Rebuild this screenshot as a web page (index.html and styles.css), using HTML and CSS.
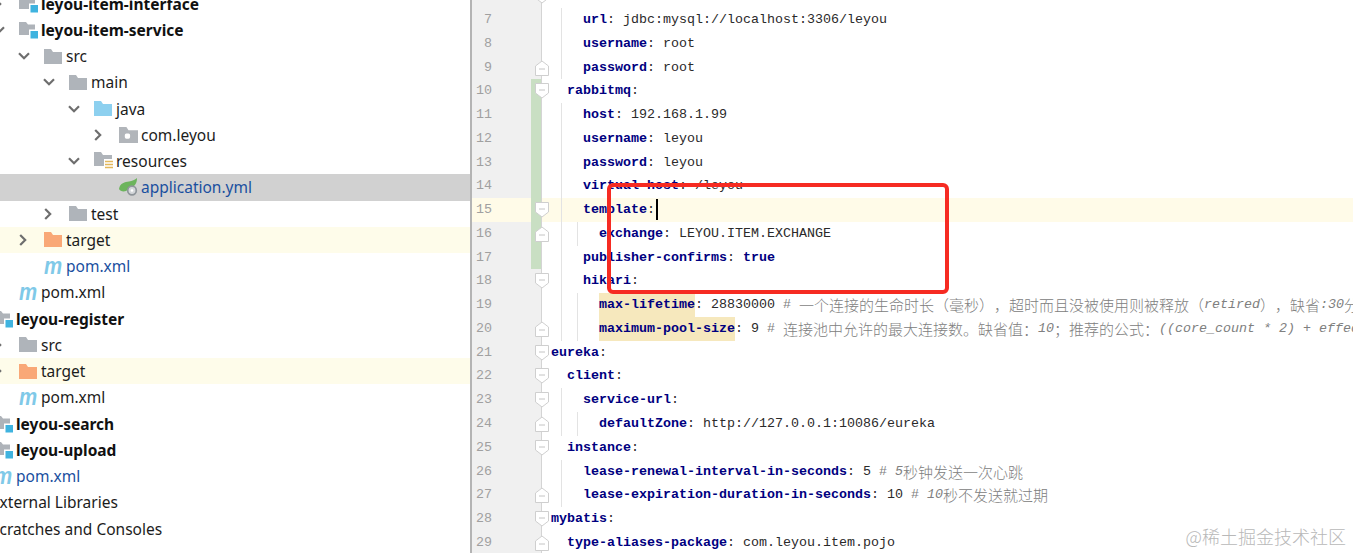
FILE: index.html
```html
<!DOCTYPE html>
<html lang="zh">
<head>
<meta charset="utf-8">
<title>application.yml</title>
<link rel="stylesheet" href="styles.css">
</head>
<body>
<svg class="defs" width="0" height="0">
  <symbol id="chev-d" viewBox="0 0 12 8"><path d="M1 1.2 6 6.2 11 1.2" fill="none" stroke="#6e6e6e" stroke-width="2.2"/></symbol>
  <symbol id="chev-r" viewBox="0 0 8 12"><path d="M1.2 1 6.2 6 1.2 11" fill="none" stroke="#6e6e6e" stroke-width="2.2"/></symbol>
  <symbol id="folder" viewBox="0 0 18 15"><path d="M0 0H7L9 3H18V15H0Z"/></symbol>
  <symbol id="module" viewBox="0 0 19 18"><path d="M0 1H7L9 3.500H16V14H0Z" fill="#aeb3b9"/><rect x="10" y="8.500" width="9" height="9" fill="#fff"/><rect x="11.500" y="10" width="7.500" height="7.500" fill="#3fb3df"/></symbol>
  <symbol id="package" viewBox="0 0 18 15"><path d="M0 0H7L9 3H18V15H0Z" fill="#b1b5ba"/><rect x="5.500" y="6" width="5" height="5" rx="1.500" fill="#fff"/></symbol>
  <symbol id="resources" viewBox="0 0 19 18"><path d="M0 0H7L9 3H18V14H0Z" fill="#afb4ba"/><rect x="10" y="7" width="9" height="11" fill="#fff"/><path d="M11 9.500H19M11 12.500H19M11 15.500H19" stroke="#e3b95c" stroke-width="1.600"/></symbol>
  <symbol id="spring" viewBox="0 0 19 18"><path d="M0 11C1 5 6 4 10 3.500 13 3 16 2 18 0 18 5 16 8 13 9L7 13C4 14 1 13 0 11Z" fill="#6cb45c"/><circle cx="13" cy="12.500" r="4.300" fill="#d4d7da" stroke="#8f959a" stroke-width="1.700"/><circle cx="13" cy="12.500" r="1.300" fill="#fff"/></symbol>
  <symbol id="fold-d" viewBox="0 0 14 16"><path d="M.5.500H13.500V10L7 15 .5 10Z" fill="#fff" stroke="#cfcfcf"/><path d="M4 7H10" stroke="#c4c4c4"/></symbol>
  <symbol id="fold-u" viewBox="0 0 14 16"><path d="M.5 15.500H13.500V6L7 1 .5 6Z" fill="#fff" stroke="#cfcfcf"/><path d="M4 9H10" stroke="#c4c4c4"/></symbol>
</svg>

<div class="page">
  <nav class="tree">
    <div class="row l1 bold"><span class="chev"><svg class="cr"><use href="#chev-r"/></svg></span><svg class="ico"><use href="#module"/></svg><span>leyou-item-interface</span></div>
    <div class="row l1 bold"><span class="chev"><svg class="cd"><use href="#chev-d"/></svg></span><svg class="ico"><use href="#module"/></svg><span>leyou-item-service</span></div>
    <div class="row l2"><span class="chev"><svg class="cd"><use href="#chev-d"/></svg></span><svg class="ico gray"><use href="#folder"/></svg><span>src</span></div>
    <div class="row l3"><span class="chev"><svg class="cd"><use href="#chev-d"/></svg></span><svg class="ico gray"><use href="#folder"/></svg><span>main</span></div>
    <div class="row l4"><span class="chev"><svg class="cd"><use href="#chev-d"/></svg></span><svg class="ico sky"><use href="#folder"/></svg><span>java</span></div>
    <div class="row l5"><span class="chev"><svg class="cr"><use href="#chev-r"/></svg></span><svg class="ico"><use href="#package"/></svg><span>com.leyou</span></div>
    <div class="row l4"><span class="chev"><svg class="cd"><use href="#chev-d"/></svg></span><svg class="ico"><use href="#resources"/></svg><span>resources</span></div>
    <div class="row l5 sel blue"><span class="chev"></span><svg class="ico"><use href="#spring"/></svg><span>application.yml</span></div>
    <div class="row l3"><span class="chev"><svg class="cr"><use href="#chev-r"/></svg></span><svg class="ico gray"><use href="#folder"/></svg><span>test</span></div>
    <div class="row l2 ignored"><span class="chev"><svg class="cr"><use href="#chev-r"/></svg></span><svg class="ico orange"><use href="#folder"/></svg><span>target</span></div>
    <div class="row l2 blue"><span class="chev"></span><span class="mvn">m</span><span>pom.xml</span></div>
    <div class="row l1"><span class="chev"></span><span class="mvn">m</span><span>pom.xml</span></div>
    <div class="row l0 bold"><span class="chev"></span><svg class="ico"><use href="#module"/></svg><span>leyou-register</span></div>
    <div class="row l1"><span class="chev"><svg class="cr"><use href="#chev-r"/></svg></span><svg class="ico gray"><use href="#folder"/></svg><span>src</span></div>
    <div class="row l1 ignored"><span class="chev"><svg class="cr"><use href="#chev-r"/></svg></span><svg class="ico orange"><use href="#folder"/></svg><span>target</span></div>
    <div class="row l1"><span class="chev"></span><span class="mvn">m</span><span>pom.xml</span></div>
    <div class="row l0 bold"><span class="chev"></span><svg class="ico"><use href="#module"/></svg><span>leyou-search</span></div>
    <div class="row l0 bold"><span class="chev"></span><svg class="ico"><use href="#module"/></svg><span>leyou-upload</span></div>
    <div class="row l0 blue"><span class="chev"></span><span class="mvn">m</span><span>pom.xml</span></div>
    <div class="row lx"><span class="chev"></span><span class="blank"></span><span>External Libraries</span></div>
    <div class="row lx"><span class="chev"></span><span class="blank"></span><span>Scratches and Consoles</span></div>
  </nav>

  <main class="editor">
    <div class="line"><span class="num"></span><span class="chg"></span><svg class="fold"><use href="#fold-d"/></svg><span class="code"></span></div>
    <div class="line"><span class="num">7</span><span class="chg"></span><span class="code g1">    <b>url</b>: jdbc:mysql://localhost:3306/leyou</span></div>
    <div class="line"><span class="num">8</span><span class="chg"></span><span class="code g1">    <b>username</b>: root</span></div>
    <div class="line"><span class="num">9</span><span class="chg"></span><svg class="fold"><use href="#fold-u"/></svg><span class="code g1">    <b>password</b>: root</span></div>
    <div class="line"><span class="num">10</span><span class="chg on"></span><svg class="fold"><use href="#fold-d"/></svg><span class="code">  <b>rabbitmq</b>:</span></div>
    <div class="line"><span class="num">11</span><span class="chg on"></span><span class="code g1">    <b>host</b>: 192.168.1.99</span></div>
    <div class="line"><span class="num">12</span><span class="chg on"></span><span class="code g1">    <b>username</b>: leyou</span></div>
    <div class="line"><span class="num">13</span><span class="chg on"></span><span class="code g1">    <b>password</b>: leyou</span></div>
    <div class="line"><span class="num">14</span><span class="chg on"></span><span class="code g1">    <b>virtual-host</b>: /leyou</span></div>
    <div class="line cur"><span class="num">15</span><span class="chg on"></span><svg class="fold"><use href="#fold-d"/></svg><span class="code g1">    <b>template</b>:<i class="caret"></i></span></div>
    <div class="line"><span class="num">16</span><span class="chg on"></span><svg class="fold"><use href="#fold-u"/></svg><span class="code g2">      <b>exchange</b>: LEYOU.ITEM.EXCHANGE</span></div>
    <div class="line"><span class="num">17</span><span class="chg on"></span><span class="code g1">    <b>publisher-confirms</b>: <b>true</b></span></div>
    <div class="line"><span class="num">18</span><span class="chg"></span><svg class="fold"><use href="#fold-d"/></svg><span class="code g1">    <b>hikari</b>:</span></div>
    <div class="line"><span class="num">19</span><span class="chg"></span><span class="code g2">      <b class="hl">max-lifetime</b>: 28830000 <span class="cm"># <span class="c">一个连接的生命时长（毫秒），超时而且没被使用则被释放（</span><em>retired</em><span class="c">），缺省</span><em>:30</em><span class="c">分钟</span></span></span></div>
    <div class="line"><span class="num">20</span><span class="chg"></span><svg class="fold"><use href="#fold-u"/></svg><span class="code g2">      <b class="hl">maximum-pool-size</b>: 9 <span class="cm"># <span class="c">连接池中允许的最大连接数。缺省值：</span><em>10</em><span class="c">；推荐的公式：</span><em>((core_count * 2) + effective_spindle_count)</em></span></span></div>
    <div class="line"><span class="num">21</span><span class="chg"></span><svg class="fold"><use href="#fold-d"/></svg><span class="code"><b>eureka</b>:</span></div>
    <div class="line"><span class="num">22</span><span class="chg"></span><svg class="fold"><use href="#fold-d"/></svg><span class="code">  <b>client</b>:</span></div>
    <div class="line"><span class="num">23</span><span class="chg"></span><svg class="fold"><use href="#fold-d"/></svg><span class="code g1">    <b>service-url</b>:</span></div>
    <div class="line"><span class="num">24</span><span class="chg"></span><svg class="fold"><use href="#fold-u"/></svg><span class="code g2">      <b>defaultZone</b>: http://127.0.0.1:10086/eureka</span></div>
    <div class="line"><span class="num">25</span><span class="chg"></span><svg class="fold"><use href="#fold-d"/></svg><span class="code">  <b>instance</b>:</span></div>
    <div class="line"><span class="num">26</span><span class="chg"></span><span class="code g1">    <b>lease-renewal-interval-in-seconds</b>: 5 <span class="cm"># <em>5</em><span class="c">秒钟发送一次心跳</span></span></span></div>
    <div class="line"><span class="num">27</span><span class="chg"></span><svg class="fold"><use href="#fold-u"/></svg><span class="code g1">    <b>lease-expiration-duration-in-seconds</b>: 10 <span class="cm"># <em>10</em><span class="c">秒不发送就过期</span></span></span></div>
    <div class="line"><span class="num">28</span><span class="chg"></span><svg class="fold"><use href="#fold-d"/></svg><span class="code"><b>mybatis</b>:</span></div>
    <div class="line"><span class="num">29</span><span class="chg"></span><svg class="fold"><use href="#fold-u"/></svg><span class="code">  <b>type-aliases-package</b>: com.leyou.item.pojo</span></div>
  </main>
</div>

<div class="callout"></div>
<div class="watermark">@稀土掘金技术社区</div>
</body>
</html>
```
FILE: styles.css
```css
html, body {
  margin: 0;
  height: 553px;
  overflow: hidden;
  background: #fff;
}

.defs {
  position: absolute;
}

.page {
  display: flex;
  height: 553px;
  overflow: hidden;
}

/* project tree */
.tree {
  flex: 0 0 470px;
  box-sizing: border-box;
  height: 553px;
  overflow: hidden;
  font: 15.5px/26.26px "Noto Sans", sans-serif;
  color: #1c1c1c;
}

.row {
  display: flex;
  align-items: center;
  height: 26.26px;
  white-space: nowrap;
  margin-left: -57px;
}

.row:first-child {
  margin-top: -9.5px;
}

.lx { padding-left: 0; }
.l0 { padding-left: 25px; }
.l1 { padding-left: 50px; }
.l2 { padding-left: 75px; }
.l3 { padding-left: 100px; }
.l4 { padding-left: 125px; }
.l5 { padding-left: 150px; }

.bold {
  font-weight: 700;
  color: #111;
}

.blue {
  color: #1a4f9f;
}

.sel {
  background: #d1d1d1;
}

.ignored {
  background: #fefcea;
}

.chev {
  flex: 0 0 26px;
  display: flex;
  align-items: center;
  height: 100%;
}

.cd {
  width: 12px;
  height: 8px;
}

.cr {
  width: 8px;
  height: 12px;
  margin-left: 1px;
}

.ico {
  flex: 0 0 19px;
  width: 19px;
  height: 18px;
  margin-right: 3px;
}

.gray, .sky, .orange {
  flex-basis: 18px;
  width: 18px;
  height: 15px;
  margin-right: 4px;
}

.gray { fill: #afb4ba; }
.sky { fill: #8dd0ef; }
.orange { fill: #f9a877; }

.mvn {
  flex: 0 0 18px;
  width: 18px;
  margin-right: 4px;
  font: italic 700 24px/26px "Liberation Sans", sans-serif;
  color: #7fc9e8;
  transform: scaleX(.85);
  transform-origin: left center;
}

.blank {
  flex: 0 0 18px;
  margin-right: 4px;
}

/* editor */
.editor {
  flex: 1;
  min-width: 0;
  height: 553px;
  overflow: hidden;
  border-left: 2px solid #b4b4b4;
  font: 13.333px/23.77px "Liberation Mono", monospace;
  color: #2a2a2a;
}

.line {
  position: relative;
  display: flex;
  height: 23.77px;
  white-space: pre;
}

.line:first-child {
  margin-top: -15.8px;
}

.num {
  flex: 0 0 59px;
  box-sizing: border-box;
  padding-right: 39px;
  text-align: right;
  background: #f0f0f0;
  color: #a0a0a0;
}

.chg {
  flex: 0 0 11px;
  box-sizing: border-box;
  border-right: 1px solid #d4d4d4;
  background: #f0f0f0;
}

.chg.on {
  background: #c9dfc3;
}

.fold {
  position: absolute;
  left: 63px;
  top: 4px;
  width: 14px;
  height: 16px;
}

.code {
  flex: 1;
  min-width: 0;
  overflow: hidden;
  padding-left: 9px;
  background-repeat: no-repeat;
}

.g1 {
  background-image: linear-gradient(#e3e3e3, #e3e3e3);
  background-position: 19px 0;
  background-size: 1px 100%;
}

.g2 {
  background-image: linear-gradient(#e3e3e3, #e3e3e3), linear-gradient(#e3e3e3, #e3e3e3);
  background-position: 19px 0, 35px 0;
  background-size: 1px 100%, 1px 100%;
}

.code b {
  font-weight: 700;
  color: #000080;
}

.code .hl {
  display: inline-block;
  height: 23.77px;
  background: #f6e8bd;
}

.cur .num,
.cur .code {
  background-color: #fffbe8;
}

.caret {
  display: inline-block;
  width: 2px;
  height: 21px;
  margin-left: 1px;
  vertical-align: middle;
  background: #000;
}

.cm {
  color: #808080;
}

.cm em {
  font-style: italic;
}

.c {
  font: 300 15px/23.77px "Noto Sans CJK SC", sans-serif;
  vertical-align: top;
  text-spacing-trim: space-all;
}

/* overlays */
.callout {
  position: absolute;
  left: 607px;
  top: 183px;
  width: 334px;
  height: 103px;
  border: 4px solid #f62b22;
  border-radius: 6px;
}

.watermark {
  position: absolute;
  right: 7px;
  bottom: 5px;
  font: 300 18px/24px "Noto Sans CJK SC", sans-serif;
  color: #b8b8b8;
}
```
